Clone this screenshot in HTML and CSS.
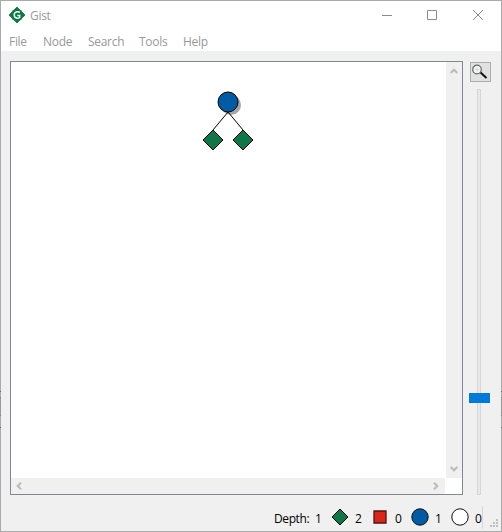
FILE: index.html
```html
<!DOCTYPE html>
<html lang="en">
<head>
<meta charset="utf-8">
<title>Gist</title>
<link rel="stylesheet" href="styles.css">
</head>
<body>
<div class="window">
  <header class="titlebar">
    <svg class="logo" width="16" height="16" viewBox="0 0 16 16"><path d="M7.300 0h1.400l1.800 1.800 1.700.3 1.500 1.700.5 1.700L16 7.300v1.400l-1.800 1.800-.5 1.700-1.500 1.700-1.700.3L8.700 16H7.300l-1.800-1.800-1.700-.3-1.500-1.700-.5-1.700L0 8.700V7.300l1.800-1.800.5-1.700 1.500-1.700 1.700-.3z" fill="#fff"/><path d="M8 0l8 8-8 8-8-8z" fill="#0b7a43" stroke="#0b7a43" stroke-width=".8"/><path d="M3 3h10v10H3z" fill="#0b7a43" opacity=".45"/><path d="M10.800 5.600C9.800 4.400 7.500 4.300 6.200 5.500 4.900 6.700 5 9.300 6.200 10.400c1.300 1.100 3.400.9 4.500.1V8.400H8.300" fill="none" stroke="#fff" stroke-width="1.500"/></svg>
    <span class="title">Gist</span>
    <svg class="controls" width="104" height="12" viewBox="0 0 104 12" fill="none" stroke="#8c8c8c"><path d="M1 6.500h10M46.500 1.500h9v9h-9zM92 1l10 10M102 1l-10 10"/></svg>
  </header>
  <nav class="menu"><span class="file">File</span><span class="node">Node</span><span class="search">Search</span><span class="tools">Tools</span><span class="help">Help</span></nav>
  <main class="content">
    <section class="viewport">
      <div class="canvas">
        <svg width="435" height="416" viewBox="11 62 435 416">
          <circle cx="231" cy="105" r="10" fill="#a5a5a8"/>
          <path d="M228 112l-15 18M228 112l15 18" stroke="#000" fill="none"/>
          <circle cx="228" cy="102" r="10" fill="#005ba5" stroke="#000"/>
          <path d="M213 130l10 10-10 10-10-10zM243 130l10 10-10 10-10-10z" fill="#0f7747" stroke="#000"/>
        </svg>
      </div>
      <div class="vbar">
        <svg width="8" height="6" viewBox="0 0 8 6"><path d="M.7 5L4 1.700 7.300 5"/></svg>
        <svg width="8" height="6" viewBox="0 0 8 6"><path d="M.7 1L4 4.300 7.300 1"/></svg>
      </div>
      <div class="hbar">
        <svg width="6" height="8" viewBox="0 0 6 8"><path d="M5 .7L1.700 4 5 7.300"/></svg>
        <svg width="6" height="8" viewBox="0 0 6 8"><path d="M1 .7L4.300 4 1 7.300"/></svg>
      </div>
    </section>
    <aside class="zoom">
      <div class="zoom-button"><svg width="19" height="18" viewBox="0 0 19 18"><path d="M9 9l6.500 6" stroke="#111" stroke-width="2"/><circle cx="6" cy="6.500" r="4.300" fill="#f1f6f6" stroke="#666" stroke-width="1.200"/><path d="M6 4v5M3.500 6.500h5" stroke="#d5dddd"/></svg></div>
      <div class="slider"><div class="handle"></div></div>
    </aside>
  </main>
  <footer class="status">
    <span class="depth">Depth:</span><span class="n n-depth">1</span>
    <svg width="18" height="18" viewBox="0 0 18 18"><path d="M9 1l8 8-8 8-8-8z" fill="#0f7747" stroke="#000"/></svg><span class="n">2</span>
    <svg width="18" height="18" viewBox="0 0 18 18"><path d="M3 3h12v12H3z" fill="#dc2419" stroke="#4b1613" stroke-width="1.300"/></svg><span class="n">0</span>
    <svg width="18" height="18" viewBox="0 0 18 18"><circle cx="9" cy="9" r="8.200" fill="#005ba5" stroke="#111"/></svg><span class="n">1</span>
    <svg width="18" height="18" viewBox="0 0 18 18"><circle cx="9" cy="9" r="8.200" fill="#fff" stroke="#111"/></svg><span class="n last">0</span>
    <svg class="grip" width="8" height="8" viewBox="0 0 8 8" fill="#bfbfbf"><path d="M6 0h2v2H6zM3 3h2v2H3zM6 3h2v2H6zM0 6h2v2H0zM3 6h2v2H3zM6 6h2v2H6z"/></svg>
  </footer>
</div>
</body>
</html>
```
FILE: styles.css
```css
* { box-sizing: border-box; }
body { margin: 0; font: 12px/16px "Open Sans", "Noto Sans", sans-serif; }
svg { display: block; flex: none; }
.window {
  width: 502px; height: 532px; border: 1px solid transparent;
  background:
    linear-gradient(#f0f0f0, #f0f0f0) padding-box,
    linear-gradient(#aaa 391px, #666 391px 392px, #aaa 392px 397px, #858585 397px 398px, #999 398px 415px, #858585 415px 416px, #aaa 416px 427px, #666 427px 428px, #aaa 428px) border-box;
  display: flex; flex-direction: column; overflow: hidden;
}
.titlebar { height: 30px; flex: none; background: #fff; display: flex; align-items: center; padding: 0 16px 2px 8px; color: #999; }
.title { margin-left: 5px; letter-spacing: -.3px; padding-top: 2px; }
.controls { margin-left: auto; }
.menu { height: 20px; flex: none; background: #fff; color: #999; display: flex; padding: 3px 0 0 8px; }
.menu span { flex: none; letter-spacing: -.3px; }
.file { width: 34px; }
.node { width: 45px; }
.search { width: 51px; }
.tools { width: 44px; }
.content { height: 434px; flex: none; margin-top: 10px; padding-left: 9px; display: flex; }
.viewport { width: 453px; height: 434px; border: 1px solid #828790; background: #fff; display: grid; grid-template: 416px 16px / 435px 16px; }
.vbar, .hbar { background: #f0f0f0; display: flex; justify-content: space-between; align-items: center; }
.vbar { flex-direction: column; padding: 6px 1px 6px 0; }
.hbar { padding: 0 6px 1px 5px; width: 434px; }
.vbar path, .hbar path { fill: none; stroke: #bababa; stroke-width: 2; }
.zoom { width: 23px; margin-left: 6px; display: flex; flex-direction: column; align-items: center; }
.zoom-button { width: 21px; height: 20px; margin-top: 1px; border: 1px solid #adadad; background: #e1e1e1; }
.slider { width: 4px; height: 406px; margin: 7px 3px 0 0; border: 1px solid #d6d6d6; background: #e7eaea; display: flex; justify-content: center; padding-top: 303px; }
.handle { width: 21px; height: 10px; flex: none; background: #007ad9; }
.status { height: 35px; display: flex; align-items: center; padding: 9px 3px 0 273px; color: #000; }
.depth { width: 41px; flex: none; letter-spacing: -.4px; padding-top: 3px; }
.n { width: 22px; flex: none; padding: 3px 0 0 6px; }
.n-depth { width: 16px; padding-left: 0; }
.last { width: 14px; height: 23px; border-right: 1px solid #d7d7d7; padding-top: 5px; }
.grip { margin: 11px 0 0 auto; }
```
